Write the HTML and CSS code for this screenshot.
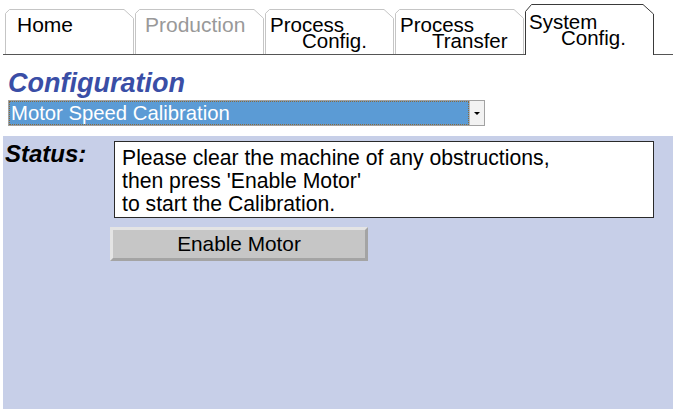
FILE: index.html
```html
<!DOCTYPE html>
<html>
<head>
<meta charset="utf-8">
<title>Configuration</title>
<link rel="stylesheet" href="styles.css">
</head>
<body>
<nav class="tabs">
  <a class="tab">
    <svg class="tab-shape" viewBox="0 0 129 46" preserveAspectRatio="none"><path d="M0.5,46 V4.5 L4.5,0.5 H119 L128.5,9.5 V46" /></svg>
    <span class="tab-label">Home</span>
  </a>
  <a class="tab tab-disabled">
    <svg class="tab-shape" viewBox="0 0 129 46" preserveAspectRatio="none"><path d="M0.5,46 V4.5 L4.5,0.5 H119 L128.5,9.5 V46" /></svg>
    <span class="tab-label">Production</span>
  </a>
  <a class="tab tab-two">
    <svg class="tab-shape" viewBox="0 0 129 46" preserveAspectRatio="none"><path d="M0.5,46 V4.5 L4.5,0.5 H119 L128.5,9.5 V46" /></svg>
    <span class="tab-label">Process<span class="tab-sub">Config.</span></span>
  </a>
  <a class="tab tab-two">
    <svg class="tab-shape" viewBox="0 0 129 46" preserveAspectRatio="none"><path d="M0.5,46 V4.5 L4.5,0.5 H119 L128.5,9.5 V46" /></svg>
    <span class="tab-label">Process<span class="tab-sub">Transfer</span></span>
  </a>
  <a class="tab tab-two tab-active">
    <svg class="tab-shape" viewBox="0 0 129 51" preserveAspectRatio="none"><path d="M0.5,51 V7.5 L6.5,0.5 H118 L128.5,10 V51" /></svg>
    <span class="tab-label">System<span class="tab-sub">Config.</span></span>
  </a>
</nav>

<h1 class="page-title">Configuration</h1>

<div class="select">
  <div class="select-value"><span class="select-text">Motor Speed Calibration</span></div>
  <div class="select-button"><span class="select-arrow"></span></div>
</div>

<section class="panel">
  <div class="status-label">Status:</div>
  <div class="status-col">
    <div class="status-box">Please clear the machine of any obstructions,<br>then press 'Enable Motor'<br>to start the Calibration.</div>
    <button class="btn" type="button">Enable Motor</button>
  </div>
</section>
</body>
</html>
```

FILE: styles.css
```css
html, body {
  margin: 0;
  padding: 0;
  background: #ffffff;
  height: 100%;
}

body {
  font-family: "Liberation Sans", Arial, sans-serif;
  color: #000;
  display: flex;
  flex-direction: column;
  overflow: hidden;
}

/* ---------- tab strip ---------- */
.tabs {
  display: flex;
  align-items: flex-end;
  gap: 1px;
  height: 54px;
  margin-left: 3px;
  padding-left: 2px;
  border-bottom: 1px solid #555;
  flex: none;
}

.tab {
  position: relative;
  width: 129px;
  height: 45px;
  font-size: 21px;
  line-height: 17px;
  color: #000;
  text-decoration: none;
  flex: none;
}

.tab-shape {
  position: absolute;
  left: 0;
  top: 0;
  width: 100%;
  height: 100%;
  overflow: visible;
}

.tab-shape path {
  fill: #fff;
  stroke: #c4c4c4;
  stroke-width: 1;
}

.tab-label {
  position: relative;
  display: block;
  padding: 7px 0 0 12px;
}

.tab-disabled .tab-label {
  padding-left: 10px;
  color: #999;
}

.tab-two .tab-label {
  font-size: 20.5px;
  line-height: 16px;
  padding-left: 5px;
  padding-top: 8px;
}

.tab-sub {
  display: block;
  padding-left: 32px;
}

.tab-active {
  height: 51px;
  margin-bottom: -1px;
}

.tab-active .tab-shape path {
  stroke: #3a3a3a;
}

.tab-active .tab-label {
  padding-left: 4px;
  padding-top: 10px;
}

/* ---------- heading + selector ---------- */
.page-title {
  margin: 13px 0 0 8px;
  font-size: 27px;
  line-height: 30px;
  font-weight: bold;
  font-style: italic;
  color: #3a4ea6;
  flex: none;
}

.select {
  display: flex;
  width: 477px;
  height: 26px;
  margin: 2px 0 0 8px;
  border: 1px solid #a2a2a2;
  box-sizing: border-box;
  background: #fff;
  flex: none;
}

.select-value {
  flex: 1;
  background: #5b9bd5;
  border: 1px dotted #8a6a3a;
  display: flex;
  align-items: center;
}

.select-text {
  color: #fff;
  font-size: 20.3px;
  padding-left: 1px;
}

.select-button {
  width: 14px;
  background: #f2f2f2;
  border-left: 1px solid #b8b8b8;
  display: flex;
  align-items: center;
  justify-content: center;
}

.select-arrow {
  width: 0;
  height: 0;
  border-left: 3px solid transparent;
  border-right: 3px solid transparent;
  border-top: 3px solid #000;
}

/* ---------- status panel ---------- */
.panel {
  flex: 1;
  margin: 10px 0 0 3px;
  background: #c7cfe8;
  display: grid;
  grid-template-columns: 111px auto;
  align-content: start;
  padding-top: 5px;
}

.status-label {
  font-size: 24px;
  font-weight: bold;
  font-style: italic;
  padding-left: 2px;
  line-height: 24px;
  padding-top: 1px;
}

.status-col {
  display: flex;
  flex-direction: column;
  align-items: flex-start;
}

.status-box {
  width: 540px;
  height: 77px;
  box-sizing: border-box;
  border: 1px solid #2a2a2a;
  background: #fff;
  font-size: 21.2px;
  line-height: 23px;
  padding: 4px 0 0 7px;
}

.btn {
  margin: 9px 0 0 -4px;
  width: 258px;
  height: 34px;
  background: #c6c6c6;
  border: 3px solid;
  border-color: #e4e4e4 #a4a4a4 #a4a4a4 #e4e4e4;
  font-family: "Liberation Sans", Arial, sans-serif;
  font-size: 20.8px;
  color: #000;
  padding: 0;
}
```
